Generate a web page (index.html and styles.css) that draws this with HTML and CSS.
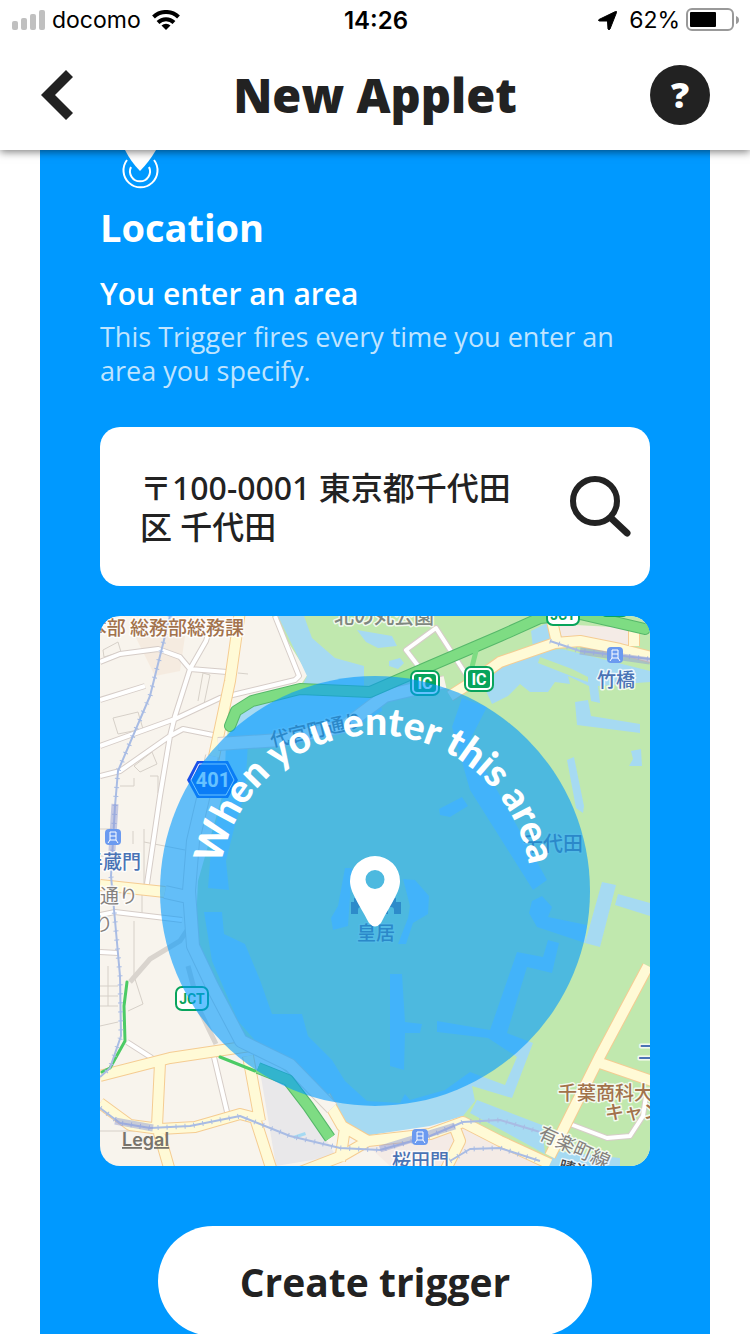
FILE: index.html
```html
<!DOCTYPE html>
<html lang="en">
<head>
    <meta charset="UTF-8">
    <meta name="viewport" content="width=device-width, initial-scale=1.0">
    <title>New Applet</title>
    <link rel="stylesheet" href="styles.css">
</head>
<body>

    <div class="top">
        <div class="status">
            <div class="status-left">
                <svg width="34" height="20" viewBox="0 0 34 20" fill="#c0c0c0">
                    <rect x="0" y="11" width="6" height="9" rx="2"/>
                    <rect x="9" y="8" width="6" height="12" rx="2"/>
                    <rect x="18" y="4" width="6" height="16" rx="2"/>
                    <rect x="27" y="0" width="6" height="20" rx="2"/>
                </svg>
                <span class="carrier">docomo</span>
                <svg width="28" height="20" viewBox="0 0 28 20" fill="none" stroke="#000" stroke-width="4">
                    <path d="M1.500 7a18 18 0 0 1 25 0"/>
                    <path d="M6 12.500a11.500 11.500 0 0 1 16 0"/>
                    <path d="M14 20l-4.500-4.500a6.500 6.500 0 0 1 9 0z" fill="#000" stroke="none"/>
                </svg>
            </div>
            <span class="time">14:26</span>
            <div class="status-right">
                <svg width="19" height="19" viewBox="0 0 19 19"><path d="M1 8.500L17.500 .500Q19 0 18.500 1.500L12 18Q11 19.500 10 18L9.500 10L1.500 10Q-.5 9.500 1 8.500z" stroke="#000"/></svg>
                <span class="percent">62%</span>
                <svg width="54" height="24" viewBox="0 0 54 24">
                    <rect x="1" y="1" width="46" height="21" rx="5" fill="none" stroke="#999" stroke-width="2"/>
                    <rect x="4" y="4" width="26" height="15" rx="1"/>
                    <path d="M50 8q3 1 3 4t-3 4z" fill="#999"/>
                </svg>
            </div>
        </div>
        <div class="nav">
            <button class="back" aria-label="Back">
                <svg width="33" height="50" viewBox="0 0 33 50"><path d="M26 0L33 7L15 25L33 43L26 50L1 25z" fill="#222"/></svg>
            </button>
            <h1>New Applet</h1>
            <button class="help" aria-label="Help">?</button>
        </div>
    </div>

    <div class="card">
        <svg class="channel" width="80" height="40" viewBox="0 0 80 40" fill="none" stroke="#fff" stroke-width="2">
            <path d="M25 0H56Q49 12 40 21Q31 12 25 0z" fill="#fff" stroke="none"/>
            <path d="M27 10a17 17 0 1 0 27 0"/>
            <path d="M31 17a10 10 0 1 0 18 0"/>
        </svg>
        <h2>Location</h2>
        <h3>You enter an area</h3>
        <p class="about">This Trigger fires every time you enter an area you specify.</p>

        <div class="search">
            <label class="hidden" for="address">Address</label>
            <textarea id="address" rows="2" spellcheck="false">〒100-0001 東京都千代田区 千代田</textarea>
            <button class="find" aria-label="Search">
                <svg width="62" height="62" viewBox="0 0 62 62" fill="none" stroke="#222" stroke-width="6">
                    <circle cx="26" cy="25" r="22"/>
                    <path d="M42 42L58 57" stroke-width="7" stroke-linecap="round"/>
                </svg>
            </button>
        </div>

        <svg class="map" viewBox="0 0 550 550">
            <rect width="550" height="550" fill="#f8f4ed"/>
            <path d="M35 20L85 20L80 55L55 60z" fill="#f5ebe0"/>

            <!-- parks -->
            <g fill="#c0e8ae">
                <path d="M172 0H550V550H460L363 500L265 520L240 500L130 410L95 330L98 265L125 170L128 105L200 70L208 58z"/>
            </g>

            <!-- moats and ponds -->
            <g fill="#a6daf2">
                <path d="M178 0H204L212 22L235 42L264 50L264 74L200 74L207 60L200 45z"/>
                <path d="M257 14L292 20L297 30L278 32L266 26z"/>
                <path d="M289 45L300 42L304 47L298 53L289 50z"/>
                <path d="M131 106L150 90L200 76L280 82L282 95L260 108L180 124L128 122z"/>
                <path d="M126 127H148L145 178L136 205L126 245L129 274L108 272L112 220L124 178z"/>
                <path d="M104 296H122L124 318L145 328L160 364L172 398H202L208 420L232 444L245 465L267 485L300 487L305 478L310 484L345 474L370 456L405 469L417 441L388 422L337 416V405L390 414L417 336L443 341L448 324L459 327L452 357L427 351L407 417L433 427L412 482L372 470L375 485L363 500L330 510L270 519L250 515L232 494L205 455L160 430L138 405L112 345z"/>
                <path d="M429 297L432 285L442 280L452 291L448 301L487 309L485 327L437 311z"/>
                <path d="M502 266L516 269L500 331L485 327z"/>
                <path d="M518 278L550 287V300L515 289z"/>
                <path d="M362 82L387 91L370 124L380 145L397 174L447 264L433 274L370 174L352 111z"/>
                <path d="M339 193L362 181L368 190L350 201L340 199z"/>
                <path d="M290 358L302 358L305 406L322 408L320 417H305L304 454L290 450z"/>
                <path d="M245 252H252L248 310L233 314L231 302L238 290z"/>
                <path d="M303 263L315 264L329 280L328 298L313 307L306 328L298 328L308 302L310 290z"/>
                <path d="M431 15L447 7L453 25L433 32z"/>
                <path d="M376 76L400 52L440 35L462 33L550 55V66L524 68L498 70L500 87L491 85L489 70L468 60L470 68L455 66L448 76L430 76L420 68L408 80L392 88L386 75z"/>
                <path d="M475 86L488 84L491 100L540 108V117L477 109z"/>
                <path d="M531 135L541 133L542 150L529 150L533 143z"/>
                <path d="M467 144L474 141L484 190L483 197L476 192z"/>
                <path d="M377 484L442 509L445 538L370 497z"/>
                <path d="M455 535L520 542L520 550H445z"/>
            </g>
            <path d="M440 41L472 53L488 61L488 66L466 58L438 47z" fill="#c0e8ae"/>

            <!-- other blocks -->
            <path d="M458 8L530 12V30L462 22z" fill="#f4ebe6"/>
            <path d="M363 506L445 540L445 550H290L265 527z" fill="#f4ebe6"/>
            <path d="M160 455L195 472L236 540L176 550z" fill="#e9e8ea"/>
            <path d="M193 520L205 516L206 519L194 523z" fill="#a6daf2"/>

            <!-- plot outlines -->
            <path class="plots" d="M3 34L18 26L21 36L4 41zM13 102L38 96L43 113L18 118zM34 150L52 136L57 148L40 156zM98 85L103 57L110 59L104 88M50 160H58V177M20 170H34V162M138 57L148 58M0 213H12M0 240H18M33 215V228M44 213V270M44 226L85 234M0 335H12M34 305V360M42 272V302M35 363L43 388L28 395M0 370H18M0 380H18M0 390H18M0 410L18 406M8 350V390M0 515H35"/>

            <!-- side streets: casing, then fill -->
            <path class="street-edge" d="M0 46L20 38L58 33L80 41L90 53L127 56M112 5L106 25L90 53L75 100L70 120L60 180L47 268M0 84L45 70M0 130L75 103L120 82L195 64L199 60L175 0M0 160L20 155L70 120L83 113L118 120M0 299L15 296L82 304M0 336L18 337M27 426L52 442M114 441L128 500M322 55L306 34L336 12L367 60M470 508L507 522L530 520L543 500L546 480"/>
            <path class="street" d="M0 46L20 38L58 33L80 41L90 53L127 56M112 5L106 25L90 53L75 100L70 120L60 180L47 268M0 84L45 70M0 130L75 103L120 82L195 64L199 60L175 0M0 160L20 155L70 120L83 113L118 120M0 299L15 296L82 304M0 336L18 337M27 426L52 442M114 441L128 500M322 55L306 34L336 12L367 60M470 508L507 522L530 520L543 500L546 480"/>
            <path d="M30 366L50 343L80 325L90 310M88 350L100 395L116 428" fill="none" stroke="#d9d4ce" stroke-width="5"/>

            <!-- main roads: casing, then fill -->
            <path class="main-edge" d="M140 -5L130 65L112 150M0 269L65 276M0 460L70 442L150 430M60 447L57 510L70 555M0 487L30 509L60 513L95 511L140 498L155 502L172 555M148 440L160 505M350 80L372 66L400 46L455 27L480 25L520 33L555 42M457 27L452 5M534 30V10M548 350L500 440L450 540M500 447L555 466M225 480L242 510L268 525L330 518L363 506L400 525L450 548M190 560L242 540L268 525M245 512L240 545M355 512L360 525L345 555"/>
            <path class="main" d="M140 -5L130 65L112 150M0 269L65 276M0 460L70 442L150 430M60 447L57 510L70 555M0 487L30 509L60 513L95 511L140 498L155 502L172 555M148 440L160 505M350 80L372 66L400 46L455 27L480 25L520 33L555 42M457 27L452 5M534 30V10M548 350L500 440L450 540M500 447L555 466M225 480L242 510L268 525L330 518L363 506L400 525L450 548M190 560L242 540L268 525M245 512L240 545M355 512L360 525L345 555"/>
            <g fill="none" stroke-linejoin="round">
                <path d="M112 140L105 174L93 225L89 275L93 330L112 370L141 425L190 449L232 492M118 128L180 124L245 110L285 80L345 66M65 276L92 282" stroke="#d8cfc6" stroke-width="14"/>
                <path d="M112 140L105 174L93 225L89 275L93 330L112 370L141 425L190 449L232 492M118 128L180 124L245 110L285 80L345 66M65 276L92 282" stroke="#f8f4ed" stroke-width="12"/>
            </g>

            <!-- expressway -->
            <g fill="none" stroke-linejoin="round" stroke-linecap="round">
                <path d="M130 110L136 95L152 85L200 73L270 76L330 50L400 20L440 2L480 -2L545 13" stroke="#56b86a" stroke-width="12"/>
                <path d="M130 110L136 95L152 85L200 73L270 76L330 50L400 20L440 2L480 -2L545 13" stroke="#7edc83" stroke-width="10"/>
                <path d="M371 55L376 35" stroke="#7edc83" stroke-width="5"/>
                <path d="M120 441L155 455M27 366L24 390L25 425L10 452L2 456" stroke="#4ccb65" stroke-width="3"/>
                <path d="M158 452L188 464L208 490L230 522" stroke="#56b86a" stroke-width="12" stroke-linecap="butt"/>
                <path d="M158 452L188 464L208 490L230 522" stroke="#7edc83" stroke-width="10" stroke-linecap="butt"/>
            </g>

            <!-- railways -->
            <path class="rail" d="M70 0L50 80L18 155L15 190L11 260L20 360L21 420L10 452L0 461M0 492L20 507L50 512L90 510L140 500L190 520L240 532L280 534L330 520L363 506L400 504L440 516M350 545L370 533L400 532L440 545M450 25L480 35L550 43"/>
            <path class="rail-ticks" d="M70 0L50 80L18 155L15 190L11 260L20 360L21 420L10 452L0 461M0 492L20 507L50 512L90 510L140 500L190 520L240 532L280 534L330 520L363 506L400 504L440 516M350 545L370 533L400 532L440 545M450 25L480 35L550 43"/>
            <path d="M15 188L11 250M15 505L53 512M280 533L355 510M480 35L550 45" fill="none" stroke="#8f9bd8" stroke-opacity=".5" stroke-width="7"/>

            <!-- stations -->
            <g transform="translate(515 39)">
                <rect class="station" x="-8" y="-8" width="16" height="16" rx="4"/>
                <path class="train" d="M-3 3V-5H3V3zM-3 -1H3M-3 3L-5 6M3 3L5 6"/>
            </g>
            <g transform="translate(13 221)">
                <rect class="station" x="-8" y="-8" width="16" height="16" rx="4"/>
                <path class="train" d="M-3 3V-5H3V3zM-3 -1H3M-3 3L-5 6M3 3L5 6"/>
            </g>
            <g transform="translate(320 521)">
                <rect class="station" x="-8" y="-8" width="16" height="16" rx="4"/>
                <path class="train" d="M-3 3V-5H3V3zM-3 -1H3M-3 3L-5 6M3 3L5 6"/>
            </g>

            <!-- road signs -->
            <path d="M97 145H128L138 164L128 182H97L87 164z" fill="#1a50e8"/>
            <path d="M99 148H126L134 164L126 179H99L91 164z" fill="#1a50e8" stroke="#fff" stroke-width="1"/>
            <text class="sign" x="113" y="171" font-size="20">401</text>
            <rect x="310" y="54" width="30" height="26" rx="7" fill="#08a45c"/>
            <rect x="313" y="57" width="24" height="20" rx="4" fill="none" stroke="#fff" stroke-width="2"/>
            <text class="sign" x="325" y="73" font-size="16">IC</text>
            <rect x="364" y="50" width="30" height="26" rx="7" fill="#08a45c"/>
            <rect x="367" y="53" width="24" height="20" rx="4" fill="none" stroke="#fff" stroke-width="2"/>
            <text class="sign" x="379" y="69" font-size="16">IC</text>
            <rect x="76" y="371" width="32" height="23" rx="6" fill="#fff" stroke="#08a45c" stroke-width="2"/>
            <text class="sign green" x="92" y="388" font-size="14">JCT</text>
            <rect x="447" y="-14" width="32" height="23" rx="6" fill="#fff" stroke="#08a45c" stroke-width="2"/>
            <text class="sign green" x="463" y="4" font-size="14">JCT</text>
            <rect x="501" y="-20" width="27" height="21" rx="5" fill="#08a45c"/>

            <!-- palace -->
            <path d="M251 298V286H254V282H257V286H261V281H264V286H286V281H289V286H293V282H296V286H301V298H294V294A3 3 0 0 0 288 294V298H264V294A3 3 0 0 0 258 294V298z" fill="#70777a"/>

            <!-- place names -->
            <g class="names">
                <text class="brown" x="144" y="19" text-anchor="end">本部 総務部総務課</text>
                <text class="gray" x="234" y="8" font-size="20">北の丸公園</text>
                <text class="blue" x="497" y="71">竹橋</text>
                <text class="blue" x="41" y="253" text-anchor="end">半蔵門</text>
                <text class="road" x="38" y="287" text-anchor="end">南通り</text>
                <text class="road" x="13" y="315" text-anchor="end">り</text>
                <text class="dark" x="172" y="131" transform="rotate(-13 172 131)">代官町通り</text>
                <text class="dark" x="483" y="235" text-anchor="end" font-size="20">千代田</text>
                <text class="dark" x="257" y="324">皇居</text>
                <text class="brown" x="458" y="484">千葉商科大学</text>
                <text class="brown" x="505" y="503">キャンパス</text>
                <text class="blue" x="538" y="443">二重橋前</text>
                <text class="blue" x="292" y="552">桜田門</text>
                <text class="road" x="437" y="522" transform="rotate(24 437 522)">有楽町線</text>
                <text class="black" x="458" y="555" font-size="16" transform="rotate(15 458 555)">晴海</text>
            </g>
            <a href="#legal"><text class="legal" x="22" y="530">Legal</text></a>

            <!-- trigger area -->
            <circle cx="275" cy="275" r="215" fill="#09f" fill-opacity=".6"/>
            <path id="arc" d="M119 275A156 156 0 0 1 431 275" fill="none"/>
            <text class="arc-text"><textPath href="#arc" startOffset="50%">When you enter this area</textPath></text>
            <path d="M275 240A25 25 0 0 1 300 265C300 276 292 286 281 307Q275 314 269 307C258 286 250 276 250 265A25 25 0 0 1 275 240zM275 254A9 9 0 0 0 275 273A9 9 0 0 0 275 254z" fill="#fff" fill-rule="evenodd"/>
        </svg>

        <button class="create">Create trigger</button>
    </div>

</body>
</html>
```

FILE: styles.css
```css
* {
    box-sizing: border-box;
}

body {
    display: flex;
    flex-direction: column;
    height: 100vh;
    margin: 0;
    overflow: hidden;
    background-color: #ffffff;
    color: #222222;
    font-family: 'Open Sans', 'Noto Sans CJK JP', sans-serif;
}

button {
    padding: 0;
    border: none;
    background: none;
    color: #222222;
    font-family: inherit;
    cursor: pointer;
}

svg {
    display: block;
}

h1, h2, h3, p {
    margin: 0;
}

.hidden {
    position: absolute;
    width: 1px;
    height: 1px;
    overflow: hidden;
    clip-path: inset(50%);
}

/* TOP BARS */
.top {
    flex: none;
    z-index: 1;
    background-color: #ffffff;
    box-shadow: 0 2px 8px rgba(0, 0, 0, 0.5);
}

.status {
    display: grid;
    grid-template-columns: 1fr auto 1fr;
    align-items: center;
    height: 40px;
    padding: 0 10px 0 12px;
    color: #000000;
    font-family: Inter, sans-serif;
    font-size: 24px;
}

.status-left, .status-right {
    display: flex;
    align-items: center;
    gap: 6px;
}

.status-right {
    justify-content: flex-end;
}

.carrier {
    margin-right: 5px;
}

.percent {
    margin-left: 6px;
}

.carrier, .percent {
    font-size: 23px;
}

.time {
    font-weight: 600;
}

.nav {
    display: flex;
    align-items: center;
    justify-content: space-between;
    height: 110px;
    padding: 0 40px;
}

.nav h1 {
    font-size: 47px;
    font-weight: 800;
    line-height: 60px;
}

.back {
    width: 60px;
}

.help {
    width: 60px;
    height: 60px;
    border-radius: 50%;
    background-color: #222222;
    color: #ffffff;
    font-size: 36px;
    font-weight: 800;
    line-height: 60px;
}

/* TRIGGER CARD */
.card {
    flex: 1;
    display: flex;
    flex-direction: column;
    min-height: 0;
    margin: 0 40px;
    padding: 0 60px;
    overflow: hidden;
    background-color: #0099ff;
    color: #ffffff;
}

.card > * {
    flex: none;
}

.card h2 {
    margin-top: 11px;
    font-size: 38px;
    font-weight: 700;
    line-height: 52px;
}

.card h3 {
    margin-top: 21px;
    font-size: 30px;
    font-weight: 600;
    line-height: 40px;
}

.about {
    margin-top: 6px;
    color: rgba(255, 255, 255, 0.75);
    font-size: 27px;
    line-height: 34px;
}

.search {
    display: flex;
    align-items: center;
    margin-top: 39px;
    height: 159px;
    padding: 0 19px 0 40px;
    border-radius: 20px;
    background-color: #ffffff;
}

.search textarea {
    flex: 1;
    min-width: 0;
    height: 78px;
    margin-right: 40px;
    padding: 0;
    border: none;
    outline: none;
    resize: none;
    overflow: hidden;
    background: none;
    color: #222222;
    font-family: 'Noto Sans', 'Noto Sans CJK JP', sans-serif;
    font-size: 32px;
    font-weight: 500;
    line-height: 39px;
}

/* MAP */
.map {
    width: 100%;
    margin-top: 30px;
    border-radius: 20px;
}

.plots, .street-edge, .street, .main-edge, .main, .rail, .rail-ticks {
    fill: none;
    stroke-linejoin: round;
}

.plots {
    stroke: #d6d0c8;
    stroke-width: 1;
}

.street-edge {
    stroke: #d6cdc8;
    stroke-width: 6;
}

.street {
    stroke: #ffffff;
    stroke-width: 4;
}

.main-edge {
    stroke: #f5cc92;
    stroke-width: 12;
}

.main {
    stroke: #fffad6;
    stroke-width: 10;
}

.rail {
    stroke: #a9bce4;
    stroke-width: 2;
}

.rail-ticks {
    stroke: #a9bce4;
    stroke-width: 5;
    stroke-dasharray: 1 8;
}

.station {
    fill: #6b9af0;
}

.train {
    fill: none;
    stroke: #ffffff;
    stroke-width: 1;
}

.sign {
    fill: #ffffff;
    font-family: Roboto, sans-serif;
    font-weight: 700;
    text-anchor: middle;
}

.green {
    fill: #08a45c;
}

.names {
    font-family: 'Noto Sans CJK JP', sans-serif;
    font-size: 19px;
    font-weight: 500;
    stroke: #ffffff;
    stroke-opacity: 0.8;
    stroke-width: 3;
    stroke-linejoin: round;
    paint-order: stroke;
}

.brown {
    fill: #a2724b;
}

.blue {
    fill: #4a73b5;
}

.gray {
    fill: #7f8880;
}

.road {
    fill: #85817d;
    font-weight: 400;
}

.dark {
    fill: #6b6f78;
    stroke-opacity: 0.2;
}

.black {
    fill: #444444;
}

.legal {
    fill: #77736c;
    font-family: Inter, sans-serif;
    font-size: 18px;
    font-weight: 600;
    text-decoration: underline;
}

.arc-text {
    fill: #ffffff;
    font-family: Lato, sans-serif;
    font-size: 39px;
    font-weight: 900;
    text-anchor: middle;
}

.create {
    align-self: center;
    width: 434px;
    height: 110px;
    margin-top: 60px;
    border-radius: 55px;
    background-color: #ffffff;
    font-size: 39px;
    font-weight: 700;
}
```
